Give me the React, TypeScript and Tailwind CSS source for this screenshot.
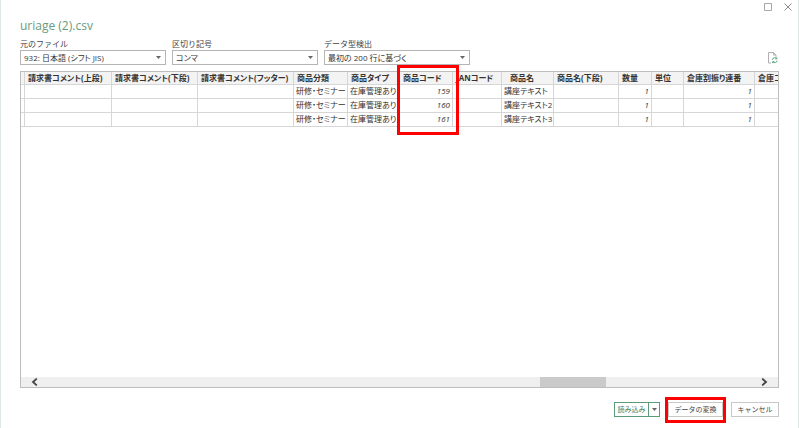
import type { ReactNode } from 'react'

const COLUMNS = [
  { title: '', width: 'w-[4px]' },
  { title: '請求書コメント(上段)', width: 'w-[87px]' },
  { title: '請求書コメント(下段)', width: 'w-[86px]' },
  { title: '請求書コメント(フッター)', width: 'w-[96px]' },
  { title: '商品分類', width: 'w-[54px]' },
  { title: '商品タイプ', width: 'w-[52px]' },
  { title: '商品コード', width: 'w-[53px]', numeric: true },
  { title: 'JANコード', width: 'w-[49px]' },
  { title: '商品名', width: 'w-[52px]', indent: true },
  { title: '商品名(下段)', width: 'w-[65px]' },
  { title: '数量', width: 'w-[33px]', numeric: true },
  { title: '単位', width: 'w-[32px]' },
  { title: '倉庫割振り連番', width: 'w-[71px]', numeric: true },
  { title: '倉庫コード', width: 'w-[60px]' },
]

const ROWS = [
  ['', '', '', '', '研修・セミナー', '在庫管理あり', '159', '', '講座テキスト', '', '1', '', '1', ''],
  ['', '', '', '', '研修・セミナー', '在庫管理あり', '160', '', '講座テキスト2', '', '1', '', '1', ''],
  ['', '', '', '', '研修・セミナー', '在庫管理あり', '161', '', '講座テキスト3', '', '1', '', '1', ''],
]

const FIELDS = [
  { id: 'origin', label: '元のファイル', value: '932: 日本語 (シフト JIS)' },
  { id: 'delimiter', label: '区切り記号', value: 'コンマ' },
  { id: 'detection', label: 'データ型検出', value: '最初の 200 行に基づく' },
]

function Caret({ className }: { className?: string }) {
  return (
    <svg className={className} width="5" height="3" viewBox="0 0 5 3" fill="#666">
      <path d="M0 0h5L2.5 3z" />
    </svg>
  )
}

function SelectField({ id, label, value }: { id: string; label: string; value: string }) {
  return (
    <div className="w-[146px]">
      <label htmlFor={id} className="block h-3 text-[8px] leading-3 text-[#444] [font-feature-settings:normal]">{label}</label>
      <div className="relative">
        <select
          id={id}
          className="block h-[15px] w-full appearance-none border border-[#b5b5b5] bg-white px-[3px] text-[8px] leading-3 text-[#333]"
        >
          <option>{value}</option>
        </select>
        <Caret className="pointer-events-none absolute right-[5px] top-1.5" />
      </div>
    </div>
  )
}

function FooterButton({ children }: { children: ReactNode }) {
  return (
    <button className="block h-[15px] w-full border border-[#c8c8c8] bg-white text-center text-[7px] leading-3 text-[#444] [font-feature-settings:normal]">
      {children}
    </button>
  )
}

function PreviewTable() {
  return (
    <table className="w-[794px] table-fixed border-separate border-spacing-0 text-[8px] leading-3 text-[#333]">
      <thead>
        <tr>
          {COLUMNS.map((c) => (
            <th
              key={c.title}
              className={`${c.width} h-[13px] overflow-hidden whitespace-nowrap border-b border-r border-[#d6d6d6] bg-[#f3f3f3] p-0 text-left align-top font-bold text-[#333] ${c.indent ? 'pl-2' : c.title ? 'pl-[3px]' : ''}`}
            >
              {c.title}
            </th>
          ))}
        </tr>
      </thead>
      <tbody>
        {ROWS.map((row) => (
          <tr key={row[6]}>
            {row.map((cell, i) => (
              <td
                key={i}
                className={`h-3.5 whitespace-nowrap border-b border-r border-[#d6d6d6] p-0 align-top ${i > 0 ? 'px-0.5' : ''} ${COLUMNS[i].numeric ? 'text-right italic' : ''}`}
              >
                {cell}
              </td>
            ))}
          </tr>
        ))}
      </tbody>
    </table>
  )
}

export default function App() {
  return (
    <div
      lang="ja"
      className="flex min-h-screen flex-col border-x border-[#dce9e5] bg-white px-[19px] font-['Open_Sans','Noto_Sans_CJK_JP',sans-serif] [font-feature-settings:'palt']"
    >
      <div className="-mr-[13px] flex h-3.5 items-center justify-end gap-3">
        <button aria-label="最大化" className="block">
          <svg width="8" height="8" viewBox="0 0 8 8" fill="none" stroke="#a8a8a8">
            <path d="M.5 .5h7v7h-7z" />
          </svg>
        </button>
        <button aria-label="閉じる" className="block">
          <svg width="8" height="8" viewBox="0 0 8 8" fill="none" stroke="#8c8c8c">
            <path d="M.5 .5l7 7M7.5 .5l-7 7" />
          </svg>
        </button>
      </div>

      <h1 className="mb-1 mt-[3px] h-[17px] text-[12px] leading-[17px] text-[#6b9b7d]">uriage (2).csv</h1>

      <div className="flex items-end gap-1.5">
        {FIELDS.map((f) => <SelectField key={f.id} {...f} />)}
        <button aria-label="更新" className="mb-px ml-auto mr-px block">
          <svg width="10" height="12" viewBox="0 0 10 12" fill="none">
            <path d="M3 11H.5V.5h5L8 3v2M5.5.5V3H8" stroke="#b0b0b0" />
            <path d="M4.3 7.8a2.4 2.4 0 0 1 4.2-1.2M8.8 5.3v1.6H7.2M9.2 8.6A2.4 2.4 0 0 1 5 9.8M4.7 11.2V9.6h1.6" stroke="#5aa27b" />
          </svg>
        </button>
      </div>

      <div className="relative mt-1.5 flex flex-1 flex-col border border-[#bdbdbd]">
        <div className="w-full min-w-0 flex-1 overflow-hidden">
          <PreviewTable />
        </div>
        <div className="flex h-2.5 items-center bg-[#efefef] px-2.5">
          <button aria-label="左へスクロール" className="block">
            <svg width="7" height="8" viewBox="0 0 7 8" fill="none" stroke="#444" strokeWidth="1.8">
              <path d="M5.8.6L2 4l3.8 3.4" />
            </svg>
          </button>
          <div className="flex h-full flex-1">
            <div className="w-[502px] shrink-0" />
            <div className="h-full w-[66px] bg-[#cacaca]" />
          </div>
          <button aria-label="右へスクロール" className="block">
            <svg width="7" height="8" viewBox="0 0 7 8" fill="none" stroke="#444" strokeWidth="1.8">
              <path d="M1.2.6L5 4 1.2 7.4" />
            </svg>
          </button>
        </div>
        <div className="pointer-events-none absolute -top-[7px] left-[376px] h-[70px] w-[62px] border-3 border-[#fe0000]" />
      </div>

      <div className="flex h-10 items-start justify-end gap-2 pt-3.5">
        <div className="flex h-[15px] w-[46px] border border-[#5c9b78]">
          <button className="flex-1 text-center text-[7px] leading-3 text-[#3f805c] [font-feature-settings:normal]">読み込み</button>
          <button aria-label="読み込みオプション" className="flex w-[11px] items-center justify-center border-l border-[#5c9b78]">
            <Caret />
          </button>
        </div>
        <div className="relative w-[55px]">
          <FooterButton>データの変換</FooterButton>
          <div className="pointer-events-none absolute -inset-x-[3px] -bottom-1.5 -top-[5px] border-3 border-[#fe0000]" />
        </div>
        <div className="w-12">
          <FooterButton>キャンセル</FooterButton>
        </div>
      </div>
    </div>
  )
}
